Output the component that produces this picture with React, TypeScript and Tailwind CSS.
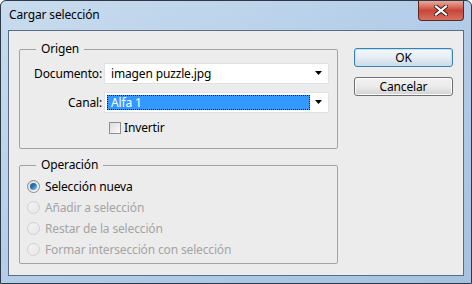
import React from "react";

function Arrow() {
  return (
    <svg width="8" height="5" viewBox="0 0 8 5" className="shrink-0">
      <path d="M0 0h7L3.5 4z" fill="#000" />
    </svg>
  );
}

function Radio({ on, disabled }: { on?: boolean; disabled?: boolean }) {
  return (
    <span
      className={`flex h-[13px] w-[13px] shrink-0 items-center justify-center rounded-full border ${
        disabled
          ? "border-[#d0d0d0] bg-gradient-to-br from-[#f4f4f4] to-[#e6e6e6]"
          : "border-[#8a8a8a] bg-gradient-to-br from-[#d8d8d8] to-[#fafafa]"
      }`}
    >
      {on && (
        <span className="h-[7px] w-[7px] rounded-full bg-gradient-to-br from-[#1d4f86] via-[#2f7bc0] to-[#8fd0f5]" />
      )}
    </span>
  );
}

export default function App() {
  const ops = [
    { t: "Selección nueva", on: true },
    { t: "Añadir a selección", dis: true },
    { t: "Restar de la selección", dis: true },
    { t: "Formar intersección con selección", dis: true },
  ];

  return (
    <div className="flex h-[284px] w-[472px] flex-col rounded-t-[6px] border border-[#2b3949] bg-gradient-to-br from-[#c9dcee] via-[#b3cde8] to-[#a6c2e0] font-['Noto_Sans',sans-serif] text-[12px] tracking-[-0.15px] text-black">
      <div className="flex h-[29px] shrink-0 items-start justify-between">
        <span className="pl-[8px] pt-[6px] leading-[15px]">Cargar selección</span>
        <div className="mr-[7px] flex h-[20px] w-[46px] items-center justify-center rounded-b-[4px] border border-t-0 border-[#5b2a22] bg-gradient-to-b from-[#e9a99b] via-[#c8453a] to-[#d6705f]">
          <svg width="14" height="11" viewBox="0 0 14 11">
            <path d="M2 1.5l10 8M12 1.5l-10 8" stroke="#3a1a16" strokeWidth="4" strokeLinecap="square" />
            <path d="M2 1.5l10 8M12 1.5l-10 8" stroke="#fff" strokeWidth="2.2" strokeLinecap="square" />
          </svg>
        </div>
      </div>

      <div className="mx-[7px] mb-[7px] flex flex-1 border border-[#5a6d84] bg-[#ececec] pl-[10px] pt-[10px]">
        <div className="flex w-[319px] flex-col">
          <fieldset className="h-[108px] rounded-[2px] border border-[#a3a3a3]">
            <legend className="ml-[16px] px-[5px] leading-[16px]">Origen</legend>
            <div className="mt-[6px] flex items-center">
              <span className="w-[82px] text-right leading-[16px]">Documento:</span>
              <div className="ml-[2px] flex h-[21px] w-[225px] items-center justify-between border border-[#e2e2e2] bg-white pl-[6px] pr-[5px]">
                <span>imagen puzzle.jpg</span>
                <Arrow />
              </div>
            </div>
            <div className="mt-[8px] flex items-center">
              <span className="w-[82px] text-right leading-[16px]">Canal:</span>
              <div className="ml-[2px] flex h-[21px] w-[225px] items-center justify-between border border-[#e2e2e2] bg-white pl-[2px] pr-[5px]">
                <span className="flex h-[15px] w-[203px] items-center border border-dotted border-[#1a1a1a] bg-[#3399ff] pl-[3px] text-white">
                  Alfa 1
                </span>
                <Arrow />
              </div>
            </div>
            <div className="mt-[7px] flex items-center pl-[89px]">
              <span className="h-[12px] w-[12px] border border-[#8e8f8f] bg-gradient-to-br from-[#dcdcdc] to-[#fbfbfb]" />
              <span className="ml-[3px] leading-[16px]">Invertir</span>
            </div>
          </fieldset>

          <fieldset className="mt-[8px] h-[107px] rounded-[2px] border border-[#a3a3a3]">
            <legend className="ml-[16px] px-[5px] leading-[16px]">Operación</legend>
            <div className="mt-[3px] flex flex-col pl-[7px]">
              {ops.map((o) => (
                <div key={o.t} className="flex h-[21px] items-center">
                  <Radio on={o.on} disabled={o.dis} />
                  <span className={`ml-[5px] ${o.dis ? "text-[#a4a4a4]" : ""}`}>{o.t}</span>
                </div>
              ))}
            </div>
          </fieldset>
        </div>

        <div className="ml-[16px] mt-[7px] flex flex-col gap-[10px]">
          <button className="h-[19px] w-[99px] rounded-[3px] border border-[#3c7fb1] bg-gradient-to-b from-[#f2f8fc] via-[#e6eef5] to-[#cbd9e4] leading-[15px] shadow-[inset_0_0_0_1px_#bfe4f8]">
            OK
          </button>
          <button className="h-[19px] w-[99px] rounded-[3px] border border-[#707070] bg-gradient-to-b from-[#f2f2f2] via-[#ebebeb] to-[#d2d2d2] leading-[15px] shadow-[inset_0_0_0_1px_#fcfcfc]">
            Cancelar
          </button>
        </div>
      </div>
    </div>
  );
}
